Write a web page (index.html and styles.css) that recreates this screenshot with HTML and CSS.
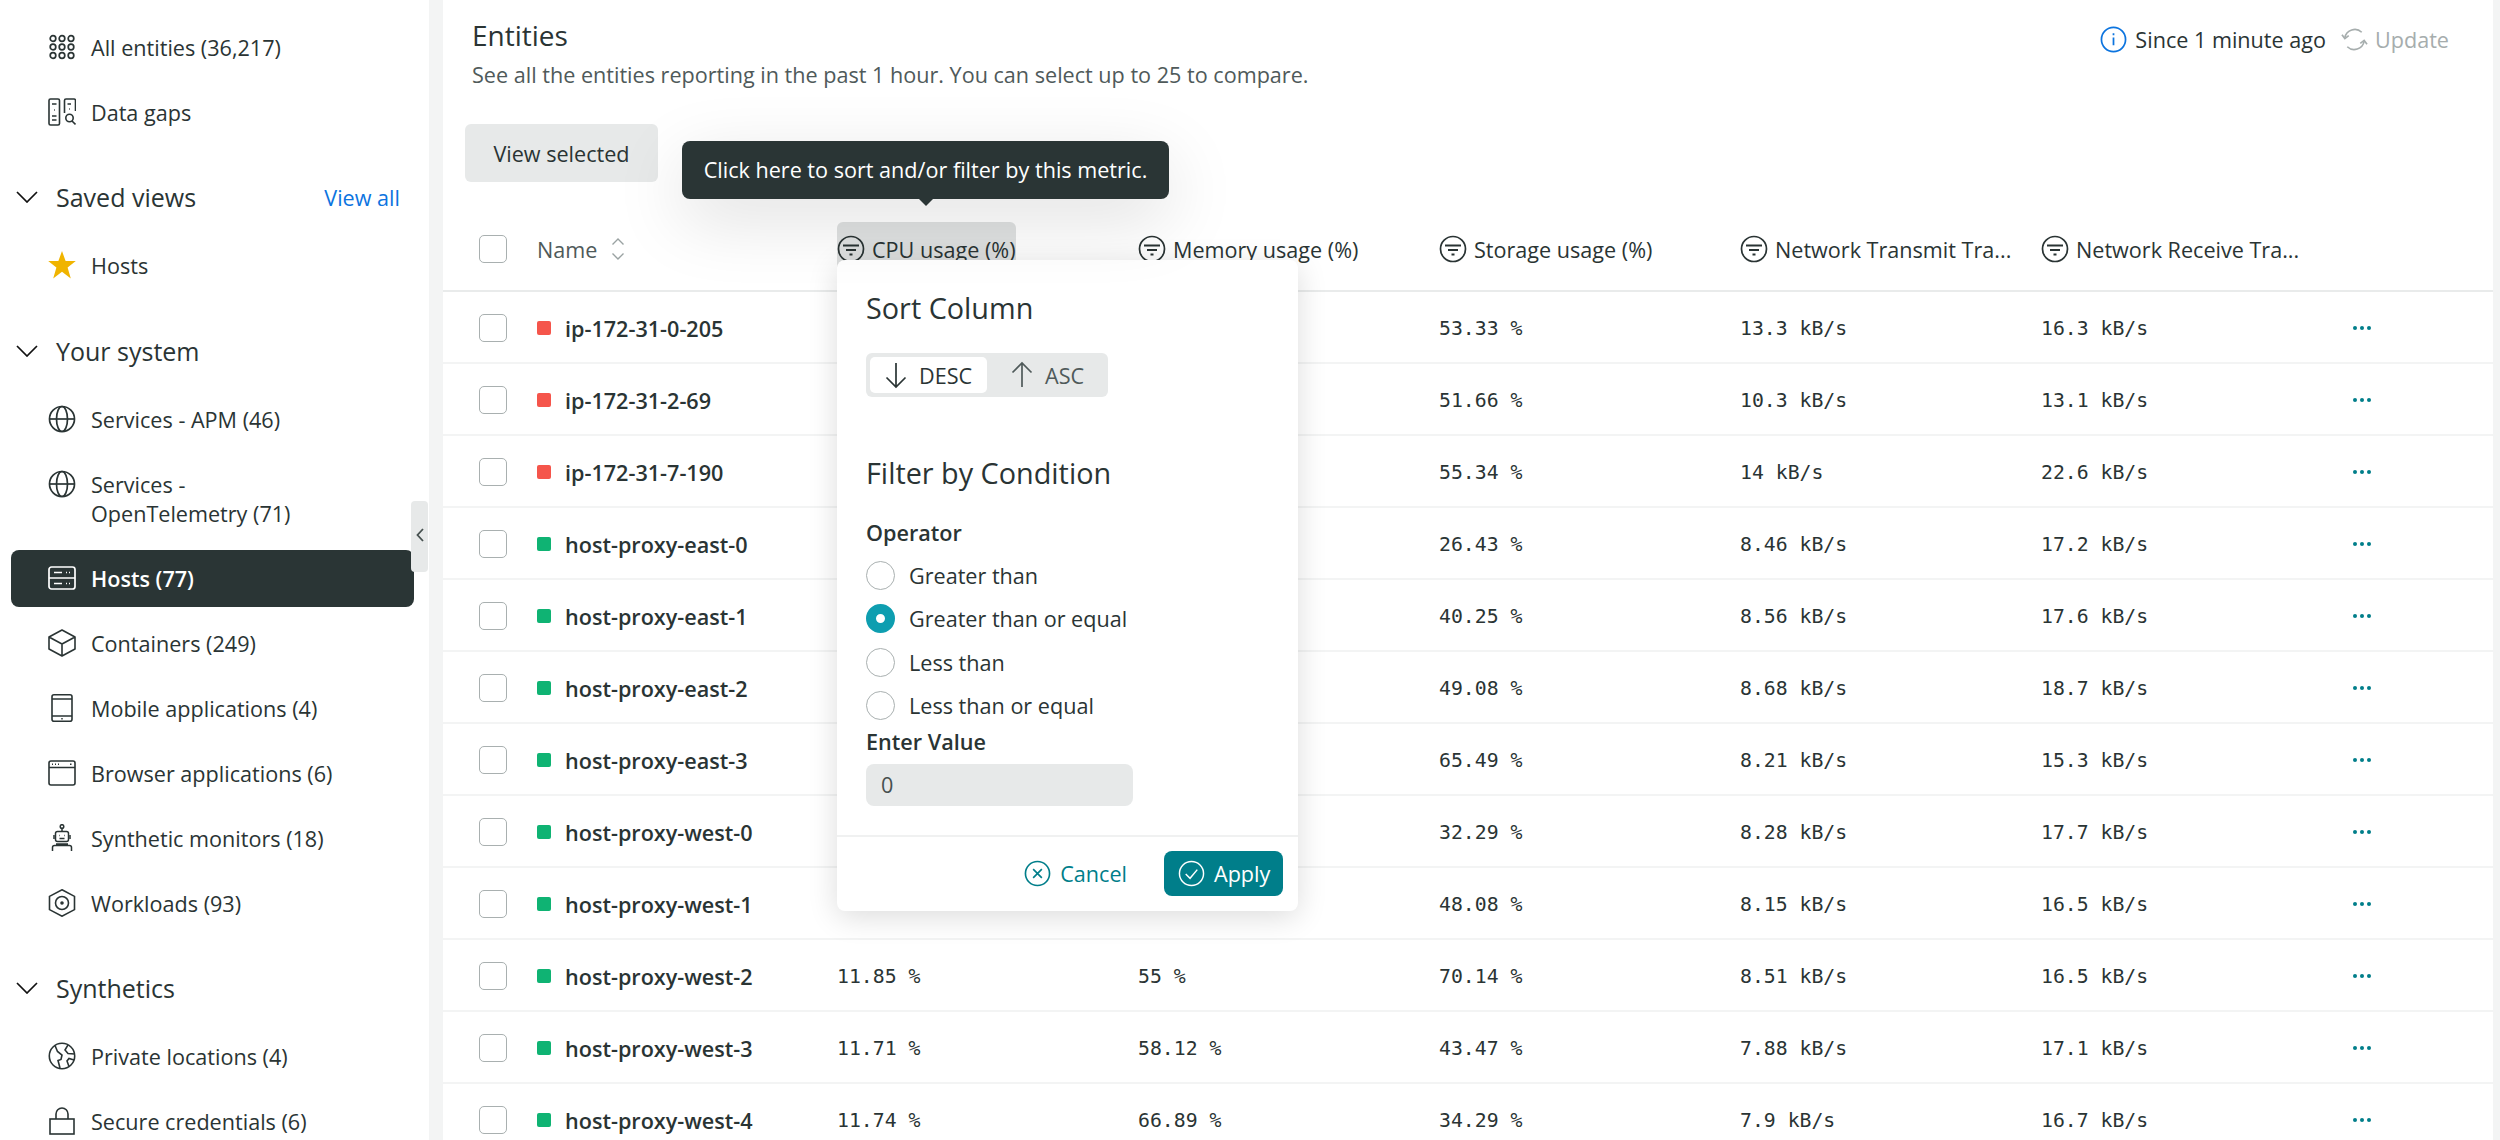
FILE: index.html
```html
<!DOCTYPE html>
<html lang="en">
  <head>
    <meta charset="UTF-8" />
    <meta name="viewport" content="width=device-width, initial-scale=1.0" />
    <title>Entities</title>
    <link rel="stylesheet" href="styles.css">
  </head>
  <body>
    <svg class="defs" width="0" height="0">
      <symbol id="filter" viewBox="0 0 28 28">
        <circle cx="14" cy="14" r="12.5" fill="none" stroke="currentColor" stroke-width="1.7"/>
        <path d="M6 10.5h16M9 15h10M12.5 19.5h3" fill="none" stroke="currentColor" stroke-width="1.8"/>
      </symbol>
      <symbol id="chevron" viewBox="0 0 22 12">
        <path d="M1 1l10 10L21 1" fill="none" stroke="currentColor" stroke-width="1.7"/>
      </symbol>
      <symbol id="globe" viewBox="0 0 28 28">
        <g fill="none" stroke="currentColor" stroke-width="1.7">
          <circle cx="14" cy="14" r="12.5"/>
          <ellipse cx="14" cy="14" rx="5.5" ry="12.5"/>
          <path d="M1.5 14h25"/>
        </g>
      </symbol>
      <symbol id="dots" viewBox="0 0 18 4">
        <circle cx="2" cy="2" r="2"/><circle cx="9" cy="2" r="2"/><circle cx="16" cy="2" r="2"/>
      </symbol>
    </svg>

    <div class="app">
      <aside class="sidebar">
        <a class="nav-item first">
          <svg class="nav-icon" viewBox="0 0 28 28" fill="none" stroke="currentColor" stroke-width="1.7">
            <circle cx="5" cy="5.5" r="2.8"/><circle cx="14" cy="5.5" r="2.8"/><circle cx="23" cy="5.5" r="2.8"/>
            <circle cx="5" cy="14" r="2.8"/><circle cx="14" cy="14" r="2.8"/><circle cx="23" cy="14" r="2.8"/>
            <circle cx="5" cy="22.5" r="2.8"/><circle cx="14" cy="22.5" r="2.8"/><circle cx="23" cy="22.5" r="2.8"/>
          </svg>
          <span>All entities (36,217)</span>
        </a>
        <a class="nav-item">
          <svg class="nav-icon" viewBox="0 0 28 28" fill="none" stroke="currentColor" stroke-width="1.6">
            <rect x="1" y="1" width="10.5" height="26" rx="1.5"/>
            <path d="M4 6h4.5M4 18h4.5M4 22h4.5M6 12h.8"/>
            <path d="M16.5 15V2.5A1.5 1.5 0 0 1 18 1h8a1.5 1.5 0 0 1 1.5 1.5V13M19.5 6h3.5M21 11h.8"/>
            <circle cx="21.5" cy="20" r="3.7"/><path d="M24 23l3.5 3.5"/>
          </svg>
          <span>Data gaps</span>
        </a>

        <div class="nav-section">
          <svg class="nav-chevron"><use href="#chevron"/></svg>
          <span>Saved views</span>
          <a class="view-all">View all</a>
        </div>
        <a class="nav-item">
          <svg class="nav-icon star" viewBox="0 0 28 28"><path d="M14 0l3.6 10h10.2l-8.2 6.4 3.200 11L14 20.800l-8.800 6.600 3.200-11L.2 10h10.200z"/></svg>
          <span>Hosts</span>
        </a>

        <div class="nav-section">
          <svg class="nav-chevron"><use href="#chevron"/></svg>
          <span>Your system</span>
        </div>
        <a class="nav-item">
          <svg class="nav-icon"><use href="#globe"/></svg>
          <span>Services - APM (46)</span>
        </a>
        <a class="nav-item">
          <svg class="nav-icon"><use href="#globe"/></svg>
          <span>Services -<br>OpenTelemetry (71)</span>
        </a>
        <a class="nav-item active">
          <svg class="nav-icon" viewBox="0 0 28 28" fill="none" stroke="currentColor" stroke-width="1.7">
            <rect x="1" y="3" width="26" height="22" rx="2.500"/>
            <path d="M1 14h26M6 8.500h8M6 19.500h8M18 8.500h1M21 8.500h1M18 19.500h1M21 19.500h1"/>
          </svg>
          <span>Hosts (77)</span>
        </a>
        <a class="nav-item">
          <svg class="nav-icon" viewBox="0 0 28 28" fill="none" stroke="currentColor" stroke-width="1.600" stroke-linejoin="round">
            <path d="M14 1l13 7v12l-13 7-13-7V8zM1 8l13 7 13-7M14 15v12"/>
          </svg>
          <span>Containers (249)</span>
        </a>
        <a class="nav-item">
          <svg class="nav-icon" viewBox="0 0 28 28" fill="none" stroke="currentColor" stroke-width="1.600">
            <rect x="4" y="0.800" width="20" height="26.400" rx="2"/>
            <path d="M4 5h20M4 22h20M13.300 24.700h1.400"/>
          </svg>
          <span>Mobile applications (4)</span>
        </a>
        <a class="nav-item">
          <svg class="nav-icon" viewBox="0 0 28 28" fill="none" stroke="currentColor" stroke-width="1.600">
            <rect x="1" y="2" width="26" height="24" rx="2"/>
            <path d="M1 8.500h26M4 5.200h1M7 5.200h1M10 5.200h1M22 5.200h1.500"/>
          </svg>
          <span>Browser applications (6)</span>
        </a>
        <a class="nav-item">
          <svg class="nav-icon" viewBox="0 0 28 28" fill="none" stroke="currentColor" stroke-width="1.500">
            <circle cx="14" cy="2.500" r="1.800"/>
            <path d="M14 4.500v3"/>
            <rect x="7.500" y="7.500" width="13" height="10" rx="2"/>
            <path d="M11 11.500h.6M16.400 11.500h.6M11.500 14.500h5M6 11v4M22 11v4M8 20h12M4.500 27v-3.500a2 2 0 0 1 2-2h15a2 2 0 0 1 2 2V27"/>
          </svg>
          <span>Synthetic monitors (18)</span>
        </a>
        <a class="nav-item">
          <svg class="nav-icon" viewBox="0 0 28 28" fill="none" stroke="currentColor" stroke-width="1.600">
            <path d="M14 .800l12.500 6.600v13.200L14 27.200 1.500 20.600V7.400z"/>
            <circle cx="14" cy="14" r="6.500"/>
            <circle cx="14" cy="14" r="1" fill="currentColor"/>
          </svg>
          <span>Workloads (93)</span>
        </a>

        <div class="nav-section">
          <svg class="nav-chevron"><use href="#chevron"/></svg>
          <span>Synthetics</span>
        </div>
        <a class="nav-item">
          <svg class="nav-icon" viewBox="0 0 28 28" fill="none" stroke="currentColor" stroke-width="1.600">
            <circle cx="14" cy="14" r="12.700"/>
            <path d="M7 3.500l2.500 6 4.500 3.500-1 4.500-3 1 2 7.500M20 2.800L17 8l3 3.500 6.700.5M26 18l-5-1.500-2 2.500 2 5.500"/>
          </svg>
          <span>Private locations (4)</span>
        </a>
        <a class="nav-item">
          <svg class="nav-icon" viewBox="0 0 28 28" fill="none" stroke="currentColor" stroke-width="1.600">
            <rect x="2" y="12" width="24" height="15"/>
            <path d="M8 12V7a6 6 0 0 1 12 0v5"/>
          </svg>
          <span>Secure credentials (6)</span>
        </a>
        <button class="collapse-handle">
          <svg viewBox="0 0 8 14" width="8" height="14"><path d="M7 1L1.500 7 7 13" fill="none" stroke="currentColor" stroke-width="1.800"/></svg>
        </button>
      </aside>

      <main class="main">
        <div class="page-head">
          <div>
            <h1>Entities</h1>
            <p class="subtitle">See all the entities reporting in the past 1 hour. You can select up to 25 to compare.</p>
          </div>
          <div class="refresh">
            <svg class="info" viewBox="0 0 28 28" fill="none" stroke="currentColor" stroke-width="1.800">
              <circle cx="14" cy="14" r="12.500"/>
              <path d="M14 12v8M14 7.500v2"/>
            </svg>
            <span>Since 1 minute ago</span>
            <svg class="update-icon" viewBox="0 0 28 28" fill="none" stroke="currentColor" stroke-width="1.700">
              <path d="M4 12A10.500 10.500 0 0 1 21.500 6.500M24 16a10.500 10.500 0 0 1-17.500 5.500"/>
              <path d="M1 9l3 4 4-3M27 19l-3-4-4 3"/>
            </svg>
            <span class="update">Update</span>
          </div>
        </div>

        <button class="view-selected">View selected</button>

        <div class="table">
          <div class="row head">
            <span class="checkbox"></span>
            <div class="cell name-cell">
              <span class="name-head">Name</span>
              <svg class="sort-icon" viewBox="0 0 14 24" fill="none" stroke="currentColor" stroke-width="1.400"><path d="M1.500 7.500L7 2l5.500 5.500M1.500 16.500L7 22l5.500-5.500"/></svg>
            </div>
            <div class="cell metric"><svg class="filter"><use href="#filter"/></svg><span>CPU usage (%)</span></div>
            <div class="cell metric"><svg class="filter"><use href="#filter"/></svg><span>Memory usage (%)</span></div>
            <div class="cell metric"><svg class="filter"><use href="#filter"/></svg><span>Storage usage (%)</span></div>
            <div class="cell metric"><svg class="filter"><use href="#filter"/></svg><span>Network Transmit Tra...</span></div>
            <div class="cell metric"><svg class="filter"><use href="#filter"/></svg><span>Network Receive Tra...</span></div>
          </div>

          <div class="row"><span class="checkbox"></span><div class="cell name-cell"><i class="status red"></i><b>ip-172-31-0-205</b></div><div class="cell value"></div><div class="cell value"></div><div class="cell value">53.33 %</div><div class="cell value">13.3 kB/s</div><div class="cell value">16.3 kB/s</div><svg class="more"><use href="#dots"/></svg></div>
          <div class="row"><span class="checkbox"></span><div class="cell name-cell"><i class="status red"></i><b>ip-172-31-2-69</b></div><div class="cell value"></div><div class="cell value"></div><div class="cell value">51.66 %</div><div class="cell value">10.3 kB/s</div><div class="cell value">13.1 kB/s</div><svg class="more"><use href="#dots"/></svg></div>
          <div class="row"><span class="checkbox"></span><div class="cell name-cell"><i class="status red"></i><b>ip-172-31-7-190</b></div><div class="cell value"></div><div class="cell value"></div><div class="cell value">55.34 %</div><div class="cell value">14 kB/s</div><div class="cell value">22.6 kB/s</div><svg class="more"><use href="#dots"/></svg></div>
          <div class="row"><span class="checkbox"></span><div class="cell name-cell"><i class="status green"></i><b>host-proxy-east-0</b></div><div class="cell value"></div><div class="cell value"></div><div class="cell value">26.43 %</div><div class="cell value">8.46 kB/s</div><div class="cell value">17.2 kB/s</div><svg class="more"><use href="#dots"/></svg></div>
          <div class="row"><span class="checkbox"></span><div class="cell name-cell"><i class="status green"></i><b>host-proxy-east-1</b></div><div class="cell value"></div><div class="cell value"></div><div class="cell value">40.25 %</div><div class="cell value">8.56 kB/s</div><div class="cell value">17.6 kB/s</div><svg class="more"><use href="#dots"/></svg></div>
          <div class="row"><span class="checkbox"></span><div class="cell name-cell"><i class="status green"></i><b>host-proxy-east-2</b></div><div class="cell value"></div><div class="cell value"></div><div class="cell value">49.08 %</div><div class="cell value">8.68 kB/s</div><div class="cell value">18.7 kB/s</div><svg class="more"><use href="#dots"/></svg></div>
          <div class="row"><span class="checkbox"></span><div class="cell name-cell"><i class="status green"></i><b>host-proxy-east-3</b></div><div class="cell value"></div><div class="cell value"></div><div class="cell value">65.49 %</div><div class="cell value">8.21 kB/s</div><div class="cell value">15.3 kB/s</div><svg class="more"><use href="#dots"/></svg></div>
          <div class="row"><span class="checkbox"></span><div class="cell name-cell"><i class="status green"></i><b>host-proxy-west-0</b></div><div class="cell value"></div><div class="cell value"></div><div class="cell value">32.29 %</div><div class="cell value">8.28 kB/s</div><div class="cell value">17.7 kB/s</div><svg class="more"><use href="#dots"/></svg></div>
          <div class="row"><span class="checkbox"></span><div class="cell name-cell"><i class="status green"></i><b>host-proxy-west-1</b></div><div class="cell value"></div><div class="cell value"></div><div class="cell value">48.08 %</div><div class="cell value">8.15 kB/s</div><div class="cell value">16.5 kB/s</div><svg class="more"><use href="#dots"/></svg></div>
          <div class="row"><span class="checkbox"></span><div class="cell name-cell"><i class="status green"></i><b>host-proxy-west-2</b></div><div class="cell value">11.85 %</div><div class="cell value">55 %</div><div class="cell value">70.14 %</div><div class="cell value">8.51 kB/s</div><div class="cell value">16.5 kB/s</div><svg class="more"><use href="#dots"/></svg></div>
          <div class="row"><span class="checkbox"></span><div class="cell name-cell"><i class="status green"></i><b>host-proxy-west-3</b></div><div class="cell value">11.71 %</div><div class="cell value">58.12 %</div><div class="cell value">43.47 %</div><div class="cell value">7.88 kB/s</div><div class="cell value">17.1 kB/s</div><svg class="more"><use href="#dots"/></svg></div>
          <div class="row"><span class="checkbox"></span><div class="cell name-cell"><i class="status green"></i><b>host-proxy-west-4</b></div><div class="cell value">11.74 %</div><div class="cell value">66.89 %</div><div class="cell value">34.29 %</div><div class="cell value">7.9 kB/s</div><div class="cell value">16.7 kB/s</div><svg class="more"><use href="#dots"/></svg></div>
        </div>

        <div class="metric-hover"></div>

        <div class="tooltip">Click here to sort and/or filter by this metric.</div>

        <div class="popover">
          <div class="popover-body">
            <h2>Sort Column</h2>
            <div class="sort-toggle">
              <span class="sort-option selected">
                <svg viewBox="0 0 24 28" width="24" height="28" fill="none" stroke="currentColor" stroke-width="1.700"><path d="M12 2v24M2.500 16.500L12 26l9.500-9.500"/></svg>
                DESC
              </span>
              <span class="sort-option">
                <svg viewBox="0 0 24 28" width="24" height="28" fill="none" stroke="currentColor" stroke-width="1.700"><path d="M12 26V2M2.500 11.500L12 2l9.500 9.500"/></svg>
                ASC
              </span>
            </div>

            <h2 class="filter-title">Filter by Condition</h2>
            <div class="field-label">Operator</div>
            <label class="radio"><i></i>Greater than</label>
            <label class="radio checked"><i></i>Greater than or equal</label>
            <label class="radio"><i></i>Less than</label>
            <label class="radio"><i></i>Less than or equal</label>
            <div class="field-label value-label">Enter Value</div>
            <div class="value-input">0</div>
          </div>
          <div class="popover-foot">
            <button class="btn-cancel">
              <svg viewBox="0 0 28 28" width="27" height="27" fill="none" stroke="currentColor" stroke-width="1.700"><circle cx="14" cy="14" r="12.500"/><path d="M9.500 9.500l9 9M18.500 9.500l-9 9"/></svg>
              Cancel
            </button>
            <button class="btn-apply">
              <svg viewBox="0 0 28 28" width="27" height="27" fill="none" stroke="currentColor" stroke-width="1.500"><circle cx="14" cy="14" r="12.500"/><path d="M8 14.500l4.500 4.500L20 10"/></svg>
              Apply
            </button>
          </div>
        </div>
      </main>
    </div>
  </body>
</html>
```

FILE: styles.css
```css
* {
  box-sizing: border-box;
}

html, body {
  margin: 0;
  height: 1140px;
  overflow: hidden;
}

body {
  font-family: 'Open Sans', sans-serif;
  font-size: 21.6px;
  color: #2a3434;
  background: #f3f4f4;
}

.defs {
  position: absolute;
}

.app {
  display: flex;
  height: 1140px;
  overflow: hidden;
}

/* sidebar */
.sidebar {
  position: relative;
  width: 429px;
  flex: none;
  height: 1140px;
  padding: 18.5px 15px 0 11px;
  background: #fff;
  overflow: hidden;
}

.nav-item {
  display: flex;
  align-items: flex-start;
  gap: 15px;
  padding: 14px 10px 14px 37px;
  margin-bottom: 8px;
  line-height: 29px;
  border-radius: 8px;
}

.nav-item.active {
  background: #2a3535;
  color: #fff;
  font-weight: 600;
}

.nav-icon {
  width: 28px;
  height: 28px;
  flex: none;
}

.star {
  fill: #f0b400;
}

.nav-section {
  display: flex;
  align-items: center;
  height: 36px;
  margin: 38.5px 0 22px;
  padding-left: 5px;
  font-size: 25px;
}

.nav-chevron {
  width: 22px;
  height: 12px;
  margin-right: 18px;
  color: #111;
}

.view-all {
  margin: 0 14px 0 auto;
  font-size: 21.6px;
  color: #0c74df;
}

.collapse-handle {
  position: absolute;
  top: 501px;
  right: 1px;
  width: 17px;
  height: 71px;
  padding: 0;
  border: none;
  border-radius: 4px;
  background: #e7e9e9;
  color: #46504f;
}

/* main area */
.main {
  position: relative;
  flex: 1;
  margin: 0 7px 0 14px;
  background: #fff;
}

.page-head {
  display: flex;
  justify-content: space-between;
  padding: 15px 44px 0 29px;
}

h1 {
  margin: 0;
  font-size: 28px;
  font-weight: 400;
  line-height: 40px;
}

.subtitle {
  margin: 2px 0 0;
  line-height: 36px;
  color: #4f5a5a;
}

.refresh {
  display: flex;
  align-items: center;
  height: 48px;
}

.info {
  width: 27px;
  height: 27px;
  margin-right: 8px;
  color: #0c74df;
}

.update-icon {
  width: 27px;
  height: 27px;
  margin: 0 7px 0 15px;
  color: #a6adad;
}

.update {
  color: #a6adad;
}

.view-selected {
  display: block;
  width: 193px;
  height: 58px;
  margin: 31px 0 0 22px;
  border: none;
  border-radius: 6px;
  background: #e7e9e9;
  font: inherit;
  color: #2a3434;
}

.row {
  display: flex;
  align-items: center;
  height: 72px;
  border-bottom: 2px solid #f3f4f4;
  padding: 2px 0 0 36px;
}

.row.head {
  height: 110px;
  padding-top: 26px;
  border-bottom-color: #e9ebeb;
}

.checkbox {
  width: 28px;
  height: 28px;
  flex: none;
  margin-right: 30px;
  border: 1.5px solid #a9b0b0;
  border-radius: 5px;
  background: #fff;
}

.cell {
  display: flex;
  align-items: center;
  width: 301px;
  flex: none;
  white-space: nowrap;
}

.name-cell {
  width: 300px;
}

.name-cell b {
  font-weight: 600;
}

.name-head {
  color: #4f5a5a;
}

.sort-icon {
  width: 14px;
  height: 24px;
  margin-left: 14px;
  color: #9aa2a2;
}

.metric {
  position: relative;
  z-index: 1;
  gap: 7px;
}

.filter {
  width: 28px;
  height: 28px;
  flex: none;
}

.status {
  width: 14px;
  height: 14px;
  margin-right: 14px;
  border-radius: 2px;
}

.status.red {
  background: #f5554b;
}

.status.green {
  background: #0fb373;
}

.value {
  font-family: 'DejaVu Sans Mono', monospace;
  font-size: 19.8px;
}

.more {
  width: 18px;
  height: 4px;
  margin-left: 11px;
  fill: #007e8a;
}

.metric-hover {
  position: absolute;
  left: 394px;
  top: 222px;
  width: 179px;
  height: 45px;
  border-radius: 6px 6px 0 0;
  background: #dfe1e1;
}

.tooltip {
  position: absolute;
  left: 239px;
  top: 141px;
  z-index: 3;
  width: 487px;
  height: 58px;
  border-radius: 8px;
  background: #2a3535;
  color: #fff;
  line-height: 58px;
  text-align: center;
  box-shadow: 0 20px 70px rgba(0, 0, 0, 0.13);
}

.tooltip::after {
  content: "";
  position: absolute;
  left: 237px;
  top: 58px;
  border: 7px solid transparent;
  border-top-color: #2a3535;
  border-bottom: none;
}

/* filter popover */
.popover {
  position: absolute;
  left: 394px;
  top: 260px;
  z-index: 2;
  width: 461px;
  height: 651px;
  border-radius: 8px;
  background: #fff;
  box-shadow: 0 6px 30px rgba(0, 0, 0, 0.14);
}

.popover-body {
  height: 577px;
  padding: 28px 29px 0;
  border-bottom: 2px solid #f0f1f1;
}

h2 {
  margin: 0;
  font-size: 28.8px;
  font-weight: 400;
  line-height: 40px;
}

.sort-toggle {
  display: flex;
  width: 242px;
  height: 44px;
  margin-top: 25px;
  padding: 4px;
  border-radius: 6px;
  background: #e7e9e9;
}

.sort-option {
  display: flex;
  align-items: center;
  gap: 11px;
  padding: 0 14px 0 23px;
  color: #4f5a5a;
}

.sort-option.selected {
  width: 117px;
  padding-left: 14px;
  border-radius: 5px;
  background: #fff;
  color: #2a3434;
}

.filter-title {
  margin-top: 56px;
}

.field-label {
  margin: 25px 0 6px;
  font-weight: 600;
  line-height: 30px;
}

.radio {
  display: flex;
  align-items: center;
  gap: 14px;
  height: 43.3px;
}

.radio i {
  width: 29px;
  height: 29px;
  border: 1.5px solid #a9b0b0;
  border-radius: 50%;
}

.radio.checked i {
  border: 10.500px solid #0e9eb0;
}

.field-label.value-label {
  margin: 0;
}

.value-input {
  width: 267px;
  height: 42px;
  margin-top: 7px;
  padding-left: 15px;
  border-radius: 8px;
  background: #e7e9e9;
  line-height: 42px;
  color: #46504f;
}

.popover-foot {
  display: flex;
  justify-content: flex-end;
  align-items: center;
  gap: 37px;
  padding: 14px 15px 0 0;
}

.popover-foot button {
  display: flex;
  align-items: center;
  gap: 9px;
  height: 45px;
  padding: 0;
  border: none;
  background: none;
  font: inherit;
}

.btn-cancel {
  color: #007e8a;
}

.popover-foot .btn-apply {
  width: 119px;
  padding-left: 14px;
  border-radius: 8px;
  background: #007e8a;
  color: #fff;
}
```
